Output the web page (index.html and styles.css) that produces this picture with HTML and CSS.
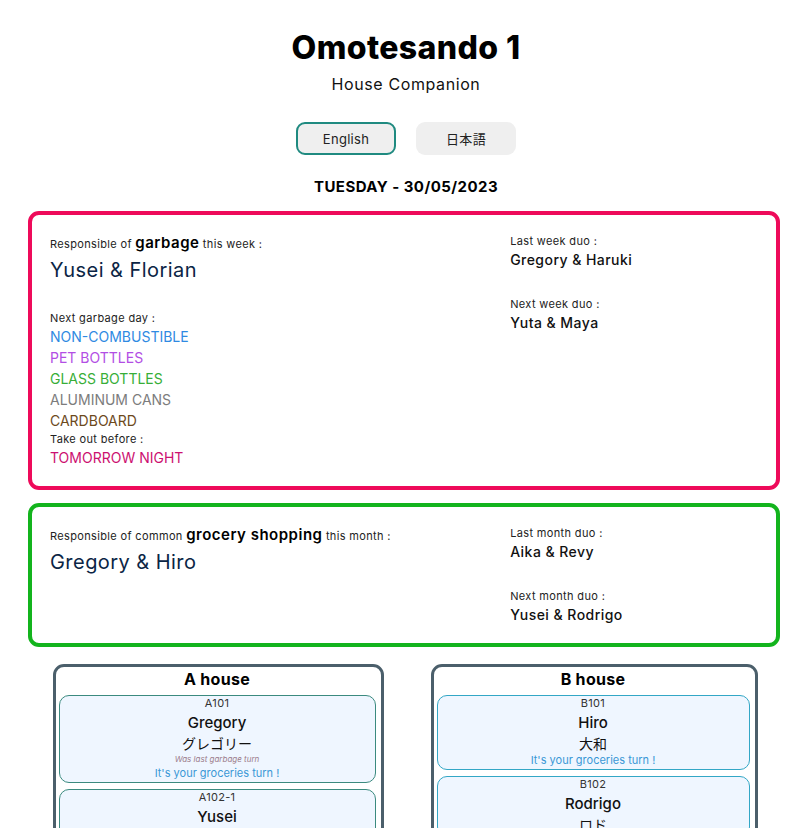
FILE: index.html
```html
<!DOCTYPE html>
<html lang="en">
<head>
<meta charset="utf-8">
<title>Omotesando 1 - House Companion</title>
<link rel="stylesheet" href="styles.css">
</head>
<body>
<div class="page">
  <header class="header">
    <h1 class="title">Omotesando 1</h1>
    <p class="subtitle">House Companion</p>
    <div class="langs">
      <button class="lang lang-active">English</button>
      <button class="lang">日本語</button>
    </div>
    <p class="date">TUESDAY - 30/05/2023</p>
  </header>

  <section class="card card-garbage">
    <div class="col-main">
      <p class="label">Responsible of <b class="task">garbage</b> this week :</p>
      <p class="duo-main">Yusei &amp; Florian</p>
      <p class="label label-gap">Next garbage day :</p>
      <ul class="kinds">
        <li class="kind k-blue">NON-COMBUSTIBLE</li>
        <li class="kind k-purple">PET BOTTLES</li>
        <li class="kind k-green">GLASS BOTTLES</li>
        <li class="kind k-gray">ALUMINUM CANS</li>
        <li class="kind k-brown">CARDBOARD</li>
      </ul>
      <p class="label label-small">Take out before :</p>
      <p class="kind k-pink">TOMORROW NIGHT</p>
    </div>
    <div class="col-side">
      <p class="label">Last week duo :</p>
      <p class="duo">Gregory &amp; Haruki</p>
      <p class="label label-next">Next week duo :</p>
      <p class="duo">Yuta &amp; Maya</p>
    </div>
  </section>

  <section class="card card-grocery">
    <div class="col-main">
      <p class="label">Responsible of common <b class="task">grocery shopping</b> this month :</p>
      <p class="duo-main">Gregory &amp; Hiro</p>
    </div>
    <div class="col-side">
      <p class="label">Last month duo :</p>
      <p class="duo">Aika &amp; Revy</p>
      <p class="label label-next">Next month duo :</p>
      <p class="duo">Yusei &amp; Rodrigo</p>
    </div>
  </section>

  <section class="houses">
    <div class="house house-a">
      <h2 class="house-title">A house</h2>
      <div class="room">
        <p class="room-no">A101</p>
        <p class="room-name">Gregory</p>
        <p class="room-jp">グレゴリー</p>
        <p class="room-last">Was last garbage turn</p>
        <p class="room-turn">It's your groceries turn !</p>
      </div>
      <div class="room">
        <p class="room-no">A102-1</p>
        <p class="room-name">Yusei</p>
        <p class="room-jp">ユウセイ</p>
      </div>
    </div>
    <div class="house house-b">
      <h2 class="house-title">B house</h2>
      <div class="room">
        <p class="room-no">B101</p>
        <p class="room-name">Hiro</p>
        <p class="room-jp">大和</p>
        <p class="room-turn">It's your groceries turn !</p>
      </div>
      <div class="room">
        <p class="room-no">B102</p>
        <p class="room-name">Rodrigo</p>
        <p class="room-jp">ロド</p>
      </div>
    </div>
  </section>
</div>
</body>
</html>
```
FILE: styles.css
```css
* { box-sizing: border-box; }

html, body {
  margin: 0;
  padding: 0;
  background: #ffffff;
}

body {
  font-family: Inter, "Noto Sans", "Noto Sans CJK JP", sans-serif;
  color: #111111;
}

p, h1, h2, ul { margin: 0; padding: 0; }
ul { list-style: none; }

.page {
  padding: 0 30px 40px 30px;
}

.header {
  display: flex;
  flex-direction: column;
  align-items: center;
}

.title {
  margin-top: 24px;
  font-size: 32px;
  line-height: 48px;
  font-weight: 800;
  letter-spacing: 0.4px;
  color: #000;
}

.subtitle {
  font-size: 16px;
  line-height: 24px;
  letter-spacing: 0.6px;
  color: #111;
}

.langs {
  margin-top: 26px;
  display: flex;
  gap: 20px;
}

.lang {
  width: 100px;
  height: 33px;
  border-radius: 9px;
  border: 2px solid transparent;
  background: #efefef;
  font-family: inherit;
  font-size: 13px;
  letter-spacing: 0.3px;
  color: #222;
  padding: 0;
}

.lang-active {
  border-color: #1f8a80;
}

.date {
  margin-top: 21px;
  font-size: 15px;
  line-height: 22px;
  font-weight: 700;
  letter-spacing: 0.45px;
  color: #000;
}

.card {
  margin: 13px 2px 0 -2px;
  border: 4px solid;
  border-radius: 11px;
  padding: 17px 18px 18px;
  display: grid;
  grid-template-columns: 65% 35%;
}

.card-garbage { border-color: #ee0a5a; }
.card-grocery { border-color: #13b41d; }

.label {
  font-size: 11px;
  line-height: 18px;
  letter-spacing: 0.35px;
  color: #222;
}

.col-main > .label:first-child { line-height: 22px; }

.task {
  font-size: 15px;
  font-weight: 600;
  letter-spacing: 0.5px;
  color: #000;
}

.duo-main {
  font-size: 20px;
  line-height: 30px;
  letter-spacing: 0.45px;
  color: #0b2545;
}

.label-gap { margin-top: 24px; }

.kind {
  font-size: 14px;
  line-height: 21px;
}

.kinds .kind:first-child { margin-top: -1px; }

.label-small { line-height: 16px; }

.k-blue { color: #2f8ae2; }
.k-purple { color: #b24ee4; }
.k-green { color: #37ae37; }
.k-gray { color: #7c7c7c; }
.k-brown { color: #6d4a1c; }
.k-pink { color: #cc1070; }

.duo {
  font-size: 14px;
  line-height: 20px;
  font-weight: 500;
  letter-spacing: 0.45px;
  color: #111;
}

.label-next { margin-top: 25px; }

.houses {
  margin-top: 17px;
  display: grid;
  grid-template-columns: 1fr 1fr;
  justify-items: center;
}

.house {
  width: 330px;
  border: 3px solid #4b5f6b;
  border-radius: 11px;
  padding: 0 5px 20px 3px;
}

.house-a { width: 331px; }
.house-b { width: 327px; }

.house-title {
  font-size: 16px;
  line-height: 24px;
  font-weight: 700;
  letter-spacing: 0.3px;
  text-align: center;
  color: #000;
  margin-bottom: 4px;
}

.room {
  border: 1px solid #3b8a7f;
  border-radius: 10px;
  background: #eff6ff;
  text-align: center;
  padding-bottom: 2px;
  margin-bottom: 6px;
}

.house-b .room { border-color: #33a7c6; }

.room-no {
  font-size: 11px;
  line-height: 14px;
  letter-spacing: 0.3px;
  color: #333;
}

.room-name {
  margin-top: 2px;
  font-size: 15px;
  line-height: 22px;
  font-weight: 500;
  color: #111;
}

.room-jp {
  font-family: "Noto Sans CJK JP", sans-serif;
  font-size: 14px;
  line-height: 19px;
  color: #111;
}

.room-last {
  font-size: 8px;
  line-height: 13px;
  font-style: italic;
  color: #9c7d8c;
}

.room-turn {
  font-size: 11px;
  line-height: 14px;
  color: #3a98d6;
}
```
